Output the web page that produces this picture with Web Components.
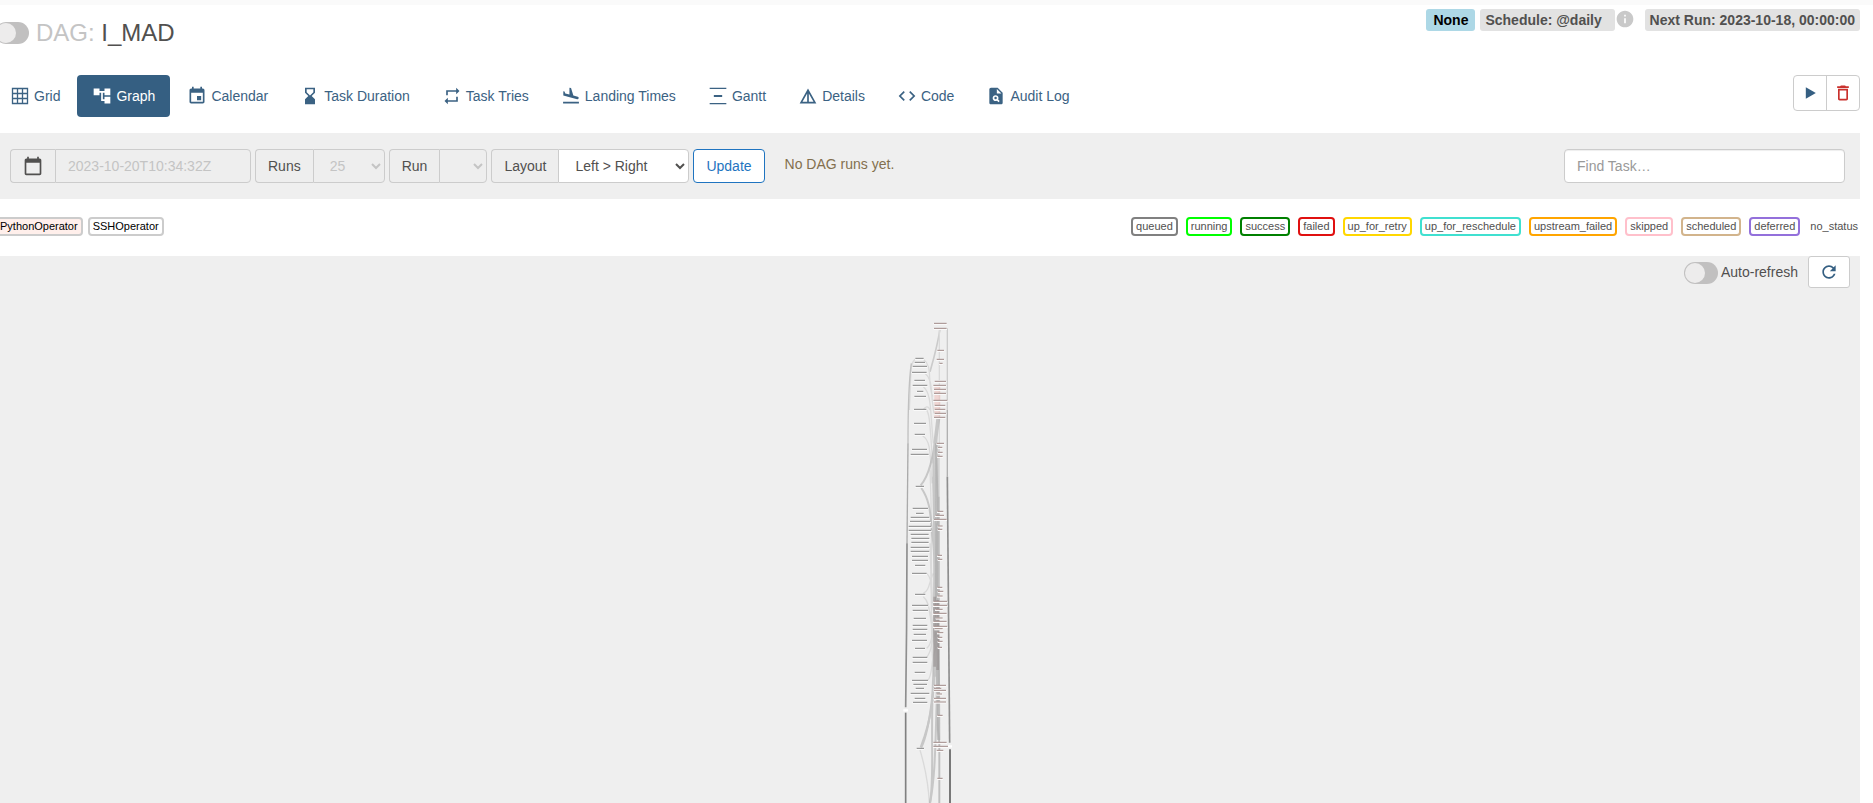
<!DOCTYPE html>
<html lang="en">
<head>
<meta charset="utf-8">
<title>I_MAD - Graph</title>
<style>
  html, body { margin: 0; }
  body {
    min-height: 100vh;
    display: flex;
    overflow-x: hidden;
    background: #fff;
    color: #51504f;
    font: 14px/20px "Liberation Sans", Arial, sans-serif;
  }
  dag-page { flex: 1; }
</style>
</head>
<body>
<dag-page></dag-page>

<script>
const ICONS = {
  grid: '<path fill="none" stroke="currentColor" stroke-width="1.6" d="M3 3h18v18H3zM9 3v18M15 3v18M3 9h18M3 15h18"/>',
  graph: '<path d="M22 11V3h-7v3H9V3H2v8h7V8h2v10h4v3h7v-8h-7v3h-2V8h2v3z"/>',
  calendar: '<path d="M17 12h-5v5h5v-5zM16 1v2H8V1H6v2H5c-1.11 0-1.99.9-1.99 2L3 19c0 1.1.89 2 2 2h14c1.1 0 2-.9 2-2V5c0-1.1-.9-2-2-2h-1V1h-2zm3 18H5V8h14v11z"/>',
  hourglass: '<path d="M18 22l-.01-6L14 12l3.99-4.01L18 2H6v6l4 4-4 3.99V22h12zM8 7.5V4h8v3.5l-4 4-4-4z"/>',
  repeat: '<path d="M7 7h10v3l4-4-4-4v3H5v6h2V7zm10 10H7v-3l-4 4 4 4v-3h12v-6h-2v4z"/>',
  landing: '<path d="M2.5 19h19v2h-19zM19.34 15.85c.8.21 1.62-.26 1.84-1.06.21-.8-.26-1.62-1.06-1.84l-5.31-1.42-2.76-9.02L10.12 2v8.28L5.15 8.95l-.93-2.32-1.45-.39v5.17l16.57 4.44z"/>',
  gantt: '<path d="M22 2v1.600H2V2h20zM7 10.800v2.400h10v-2.400H7zM2 20.400V22h20v-1.600H2z"/>',
  details: '<path d="M12 3L2 21h20L12 3zm1 5.920L18.600 19H13V8.920zm-2 0V19H5.400L11 8.920z"/>',
  code: '<path d="M9.4 16.6L4.8 12l4.600-4.600L8 6l-6 6 6 6 1.400-1.400zm5.200 0l4.600-4.600-4.600-4.600L16 6l6 6-6 6-1.400-1.400z"/>',
  audit: '<path fill-rule="evenodd" d="M14 2H6c-1.100 0-2 .9-2 2v16c0 1.100.9 2 2 2h12c1.100 0 2-.9 2-2V8l-6-6zm1.040 17.450l-1.880-1.880c-1.330.71-3.010.53-4.130-.59-1.370-1.370-1.370-3.580 0-4.950 1.370-1.370 3.580-1.370 4.950 0 1.120 1.120 1.310 2.800.59 4.130l1.880 1.880-1.410 1.410zM13 9V3.500L18.500 9H13zM11.500 13a1.500 1.500 0 1 0 0 3a1.500 1.500 0 1 0 0-3z"/>',
  date: '<path d="M20 3h-1V1h-2v2H7V1H5v2H4c-1.100 0-2 .9-2 2v16c0 1.100.9 2 2 2h16c1.100 0 2-.9 2-2V5c0-1.100-.9-2-2-2zm0 18H4V8h16v13z"/>',
  play: '<path d="M7 5v14l12-7z"/>',
  trash: '<path fill-rule="evenodd" d="M6 19c0 1.100.9 2 2 2h8c1.100 0 2-.9 2-2V7H6v12zM8 9h8v10H8V9zm7.500-5l-1-1h-5l-1 1H5v2h14V4h-3.500z"/>',
  refresh: '<path d="M17.650 6.350C16.200 4.900 14.210 4 12 4c-4.420 0-7.990 3.580-7.990 8s3.570 8 7.990 8c3.730 0 6.840-2.550 7.730-6h-2.080c-.82 2.330-3.040 4-5.650 4-3.310 0-6-2.690-6-6s2.690-6 6-6c1.660 0 3.140.69 4.220 1.780L13 11h7V4l-2.350 2.350z"/>',
  info: '<path fill-rule="evenodd" d="M12 2C6.480 2 2 6.480 2 12s4.480 10 10 10 10-4.480 10-10S17.520 2 12 2zm1 15h-2v-6h2v6zm0-8h-2V7h2v2z"/>'
};

const define = (name, render) => customElements.define(name, class extends HTMLElement {
  connectedCallback() {
    if (!this.shadowRoot) this.attachShadow({ mode: 'open' }).innerHTML = render(this);
  }
});

define('af-icon', el => `
  <style>
    :host { display: block; flex: none; width: 20px; height: 20px; }
    svg { display: block; width: 100%; height: 100%; fill: currentColor; }
  </style>
  <svg viewBox="0 0 24 24" aria-hidden="true">${ICONS[el.getAttribute('name')]}</svg>`);

define('af-toggle', () => `
  <style>
    :host { display: block; }
    label { display: flex; align-items: center; gap: 3px; }
    input {
      appearance: none; box-sizing: border-box; margin: 0; padding: 1px;
      width: 34px; height: 22px; border-radius: 11px; background: #c1c0c0;
    }
    input::before {
      content: ""; display: block; width: 20px; height: 20px;
      border-radius: 50%; background: #edecec;
    }
    input:checked::before { margin-left: 12px; }
  </style>
  <label><input type="checkbox" aria-label="Toggle"><slot></slot></label>`);

define('af-label', () => `
  <style>
    :host {
      display: block; padding: 0 5px; border-radius: 3px;
      background: #e2e2e2; font-weight: bold; line-height: 22px; white-space: nowrap;
    }
    :host([tone="none"]) { background: lightblue; color: #000; padding: 0 7px; }
  </style>
  <slot></slot>`);

define('nav-tab', el => `
  <style>
    :host { display: block; }
    a {
      display: flex; align-items: center; gap: 4px; padding: 11px 15px;
      border-radius: 4px; color: #3b6283; text-decoration: none; white-space: nowrap;
    }
    :host([active]) a { background: #355f82; color: #fff; }
  </style>
  <a href="#"><af-icon name="${el.getAttribute('icon')}"></af-icon><slot></slot></a>`);

define('dag-header', () => `
  <style>
    :host { display: flex; justify-content: space-between; align-items: flex-start; height: 70px; }
    .title { display: flex; align-items: center; gap: 7px; padding-top: 15px; }
    h3 { margin: 0; font-size: 24px; font-weight: normal; line-height: 26px; }
    h3 span { color: #c4c4c4; }
    .labels { display: flex; align-items: flex-start; gap: 5px; padding-top: 4px; }
    .schedule { display: flex; align-items: flex-start; margin-right: 5px; }
    .schedule af-icon { color: #c9c9c9; }
  </style>
  <div class="title">
    <af-toggle></af-toggle>
    <h3><span>DAG:</span> I_MAD</h3>
  </div>
  <div class="labels">
    <af-label tone="none">None</af-label>
    <div class="schedule"><af-label>Schedule: @daily&nbsp;&nbsp;</af-label><af-icon name="info"></af-icon></div>
    <af-label>Next Run: 2023-10-18, 00:00:00</af-label>
  </div>`);

define('dag-nav', () => `
  <style>
    :host { display: flex; justify-content: space-between; align-items: flex-start; margin-bottom: 16px; }
    nav { display: flex; gap: 2px; }
    .actions { display: flex; border: 1px solid #ccc; border-radius: 4px; }
    button {
      display: grid; place-items: center; width: 32px; height: 34px; padding: 0;
      border: 0; background: none; color: #355f82;
    }
    button + button { width: 33px; border-left: 1px solid #ccc; color: #c9302c; }
  </style>
  <nav>
    <nav-tab icon="grid">Grid</nav-tab>
    <nav-tab icon="graph" active>Graph</nav-tab>
    <nav-tab icon="calendar">Calendar</nav-tab>
    <nav-tab icon="hourglass">Task Duration</nav-tab>
    <nav-tab icon="repeat">Task Tries</nav-tab>
    <nav-tab icon="landing">Landing Times</nav-tab>
    <nav-tab icon="gantt">Gantt</nav-tab>
    <nav-tab icon="details">Details</nav-tab>
    <nav-tab icon="code">Code</nav-tab>
    <nav-tab icon="audit">Audit Log</nav-tab>
  </nav>
  <div class="actions">
    <button type="button" aria-label="Trigger DAG"><af-icon name="play"></af-icon></button>
    <button type="button" aria-label="Delete DAG"><af-icon name="trash"></af-icon></button>
  </div>`);

define('dag-filters', () => `
  <style>
    :host { display: flex; justify-content: space-between; padding: 16px 15px; background: #efefef; }
    form { display: flex; gap: 4px; }
    .group { display: flex; }
    label, input, select, button {
      box-sizing: border-box; height: 34px; margin: 0; padding: 6px 12px;
      border: 1px solid #ccc; border-radius: 4px; background: #fff;
      color: #51504f; font: inherit; line-height: 20px;
    }
    .group label { border-right: 0; border-radius: 4px 0 0 4px; background: #eee; }
    .group input, .group select { border-radius: 0 4px 4px 0; }
    input:disabled, select:disabled { background: #eee; color: #c4c4c4; opacity: 1; }
    .group input { width: 196px; }
    #runs { width: 72px; }
    #run { width: 48px; }
    #layout { width: 131px; }
    button { border-color: #1f74c0; color: #1f74c0; }
    p { margin: 5px 0 0 16px; color: #836f4e; }
    .search { width: 281px; box-shadow: inset 0 1px 1px #eee; }
    ::placeholder { color: #999; opacity: 1; }
  </style>
  <form>
    <div class="group">
      <label for="base" aria-label="Base date"><af-icon name="date"></af-icon></label>
      <input id="base" type="text" value="2023-10-20T10:34:32Z" disabled>
    </div>
    <div class="group">
      <label for="runs">Runs</label>
      <select id="runs" disabled><option>25</option></select>
    </div>
    <div class="group">
      <label for="run">Run</label>
      <select id="run" disabled><option></option></select>
    </div>
    <div class="group">
      <label for="layout">Layout</label>
      <select id="layout"><option>Left &gt; Right</option></select>
    </div>
    <button type="button">Update</button>
    <p>No DAG runs yet.</p>
  </form>
  <input class="search" type="text" placeholder="Find Task…" aria-label="Find Task">`);

define('legend-item', el => `
  <style>
    :host {
      display: block; padding: 0 3px; border: 2px solid ${el.getAttribute('color') || '#ccc'};
      border-radius: 4px; font-size: 11px; line-height: 15px;
    }
    :host([operator]) { color: #000; }
    :host([plain]) { border-width: 2px 0; padding: 0 2px; }
  </style>
  <slot></slot>`);

define('dag-legend', () => `
  <style>
    :host { display: flex; justify-content: space-between; padding: 18px 0 20px; }
    div { display: flex; gap: 8px; }
    .operators { gap: 5px; }
    .python { background: #ffefeb; }
  </style>
  <div class="operators">
    <legend-item operator class="python">PythonOperator</legend-item>
    <legend-item operator>SSHOperator</legend-item>
  </div>
  <div>
    <legend-item color="gray">queued</legend-item>
    <legend-item color="lime">running</legend-item>
    <legend-item color="green">success</legend-item>
    <legend-item color="#e01010">failed</legend-item>
    <legend-item color="gold">up_for_retry</legend-item>
    <legend-item color="turquoise">up_for_reschedule</legend-item>
    <legend-item color="orange">upstream_failed</legend-item>
    <legend-item color="pink">skipped</legend-item>
    <legend-item color="tan">scheduled</legend-item>
    <legend-item color="mediumpurple">deferred</legend-item>
    <legend-item color="transparent" plain>no_status</legend-item>
  </div>`);

/* Task nodes: [left, right, y], at three units to the pixel. */
const SSH_NODES = [
  [106,131,145],[104,135,157],[98,141,169],[96,140,187],[103,135,211],[98,142,226],[111,130,244],[103,138,259],
  [102,139,298],[102,138,340],[104,135,373],[96,141,418],[92,146,433],
  [107,132,529],[98,144,595],[108,131,610],[92,148,622],[90,152,634],[86,154,649],[86,154,661],[92,146,673],
  [94,148,685],[94,146,697],[92,148,712],[92,148,724],[96,144,739],[96,144,751],[105,136,766],[96,140,790],
  [105,136,853],[96,144,886],[98,144,901],[101,138,925],[98,142,946],[98,142,958],
  [101,138,973],[96,141,991],[105,135,1015],[98,142,1042],[98,142,1057],[104,136,1087],[96,144,1111],
  [100,141,1123],[107,132,1135],[92,148,1150],[104,136,1165],[99,142,1177],[110,132,1315]
];
const PYTHON_NODES = [
  [162,200,40],[162,200,55],[172,192,121],[170,192,148],[178,188,160],[164,198,214],[160,198,226],[162,198,238],
  [162,198,250],[160,202,271],[164,196,286],[164,196,298],[164,198,310],[162,196,322],[170,192,400],[174,187,412],
  [174,188,427],[172,188,439],[172,190,604],[166,192,616],[162,200,628],[174,188,648],[174,187,658],[172,186,736],
  [174,187,748],[172,187,832],[174,190,844],[172,188,858],[160,202,874],[160,202,886],[166,188,898],[160,200,910],
  [168,188,924],[160,200,934],[160,202,949],[164,188,956],[172,190,968],[174,187,982],[174,188,994],[174,186,1012],
  [162,198,1126],[162,184,1135],[162,198,1141],[170,186,1152],[162,198,1165],[162,198,1176],[172,188,1216],
  [160,200,1297],[160,204,1309],[170,190,1321],[172,188,1405]
];
const bars = (nodes, colour) => nodes.map(([a, b, y]) =>
  `<path d="M${a - 1} ${y + 2}H${b + 1}" stroke="#fafafa" stroke-width="6"/>
   <path d="M${a} ${y}H${b}" stroke="${colour}" stroke-width="3"/>`).join('');

define('dag-graph', () => `
  <style>
    :host { display: block; flex: 1; background: #efefef; overflow: hidden; }
    .bar { display: flex; justify-content: flex-end; align-items: flex-start; gap: 10px; padding-right: 10px; }
    af-toggle { padding-top: 6px; }
    span { padding-bottom: 2px; }
    button {
      display: grid; place-items: center; box-sizing: border-box; width: 42px; height: 32px;
      padding: 0; border: 1px solid #ccc; border-radius: 3px; background: #fff; color: #355f82;
    }
    svg { display: block; width: 96px; height: 503px; margin: 12px auto 0; fill: none; }
  </style>
  <div class="bar">
    <af-toggle><span>Auto-refresh</span></af-toggle>
    <button type="button" aria-label="Refresh"><af-icon name="refresh"></af-icon></button>
  </div>
  <svg viewBox="0 -30 288 1509" role="img" aria-label="Task graph">
    <g stroke="#dadada" stroke-width="4">
      <path d="M180 57C172 110 160 150 150 185" stroke="#cbcbcb" stroke-width="5"/>
      <path d="M178 60V210M108 146C88 160 94 180 88 300"/>
      <path d="M130 148C160 170 140 210 158 260M135 190C160 210 150 240 162 310M130 230C155 250 150 300 160 400"/>
      <path d="M138 298C150 310 150 350 158 460M128 302C135 290 145 285 150 300M128 378C155 390 150 450 156 520"/>
      <path d="M138 790C160 800 150 850 160 880M130 850C150 840 145 820 160 790M130 860C155 880 145 930 165 980"/>
      <path d="M146 900C165 920 150 960 165 1010M140 1015C160 1000 150 970 168 950M140 1042C160 1020 150 990 168 970"/>
      <path d="M144 1111C160 1090 150 1060 168 1010M120 1320C135 1370 145 1420 148 1479"/>
      <path d="M178 220V1479M150 480C160 700 148 800 160 900M150 700C158 900 150 1000 162 1100"/>
    </g>
    <g stroke="#b2b2b2" stroke-width="6" opacity=".65">
      <path d="M122 526C145 500 160 450 176 325M124 534C155 580 150 620 160 700C170 800 155 900 166 1000"/>
      <path d="M172 325C156 430 160 500 162 640S170 900 160 1090S164 1400 150 1479"/>
      <path d="M178 325C158 430 168 560 166 720S160 960 168 1100"/>
      <path d="M168 440C176 600 174 800 168 980S158 1220 122 1312"/>
      <path d="M160 500C170 700 160 900 164 1000S150 1260 124 1312"/>
      <path d="M176 560V1080C180 1160 164 1200 178 1300V1479"/>
      <path d="M170 640V1180C166 1300 166 1400 150 1479"/>
    </g>
    <path d="M170 400C174 600 168 760 171 930S176 1120 176 1290" stroke="#a2a2a2" stroke-width="10" opacity=".5"/>
    <path d="M164 860V1070M173 870V1080" stroke="#8a8282" stroke-width="8" opacity=".5"/>
    <path d="M172 225V320" stroke="#f0c4c0" stroke-width="18" opacity=".6"/>
    <path d="M94 160C84 230 84 330 84 400" stroke="#c0c0c0" stroke-width="4"/>
    <path d="M84 400C83 500 82 600 81 700" stroke="#aaa" stroke-width="4"/>
    <path d="M81 700C80 900 80 1000 77 1192" stroke="#8e8e8e" stroke-width="5"/>
    <path d="M77 1208V1479" stroke="#808080" stroke-width="5"/>
    <path d="M202 55V300" stroke="#ccc" stroke-width="4"/>
    <path d="M202 300V500" stroke="#b0b0b0" stroke-width="4"/>
    <path d="M202 500C205 650 208 900 209 1298" stroke="#8e8e8e" stroke-width="5"/>
    <path d="M210 1318V1479" stroke="#787878" stroke-width="6"/>
    <path d="M70 1201H84M204 1309H216" stroke="#fff" stroke-width="7"/>
    ${bars(SSH_NODES, '#858585')}
    ${bars(PYTHON_NODES, '#a08a87')}
  </svg>`);

/* The content sits 5px past the left edge and stops short of the right one. */
define('dag-page', () => `
  <style>
    :host { display: flex; flex-direction: column; min-width: 0; }
    .strip { height: 5px; background: #fafafa; }
    main { display: flex; flex-direction: column; flex: 1; margin: 0 13px 0 -5px; }
  </style>
  <div class="strip"></div>
  <main>
    <dag-header></dag-header>
    <dag-nav></dag-nav>
    <dag-filters></dag-filters>
    <dag-legend></dag-legend>
    <dag-graph></dag-graph>
  </main>`);
</script>
</body>
</html>
